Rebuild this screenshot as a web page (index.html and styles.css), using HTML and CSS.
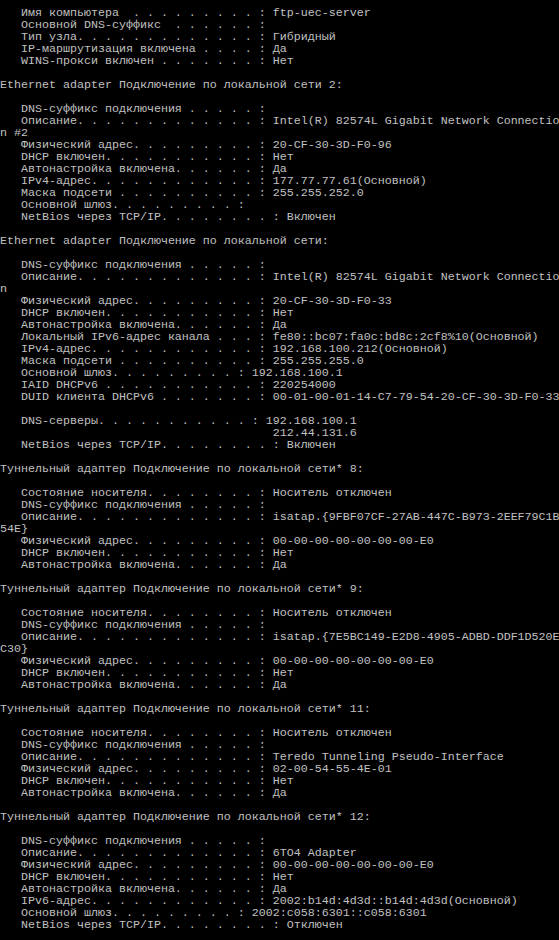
FILE: index.html
```html
<!DOCTYPE html>
<html lang="ru">

<head>
  <meta charset="UTF-8">
  <meta name="viewport" content="width=device-width, initial-scale=1.0">
  <title>ipconfig /all</title>
  <link rel="stylesheet" href="styles.css">
</head>

<body>
  <pre class="console">   Имя компьютера  . . . . . . . . . : ftp-uec-server
   Основной DNS-суффикс  . . . . . . :
   Тип узла. . . . . . . . . . . . . : Гибридный
   IP-маршрутизация включена . . . . : Да
   WINS-прокси включен . . . . . . . : Нет

Ethernet adapter Подключение по локальной сети 2:

   DNS-суффикс подключения . . . . . :
   Описание. . . . . . . . . . . . . : Intel(R) 82574L Gigabit Network Connectio
n #2
   Физический адрес. . . . . . . . . : 20-CF-30-3D-F0-96
   DHCP включен. . . . . . . . . . . : Нет
   Автонастройка включена. . . . . . : Да
   IPv4-адрес. . . . . . . . . . . . : 177.77.77.61(Основной)
   Маска подсети . . . . . . . . . . : 255.255.252.0
   Основной шлюз. . . . . . . . . :
   NetBios через TCP/IP. . . . . . . . : Включен

Ethernet adapter Подключение по локальной сети:

   DNS-суффикс подключения . . . . . :
   Описание. . . . . . . . . . . . . : Intel(R) 82574L Gigabit Network Connectio
n
   Физический адрес. . . . . . . . . : 20-CF-30-3D-F0-33
   DHCP включен. . . . . . . . . . . : Нет
   Автонастройка включена. . . . . . : Да
   Локальный IPv6-адрес канала . . . : fe80::bc07:fa0c:bd8c:2cf8%10(Основной)
   IPv4-адрес. . . . . . . . . . . . : 192.168.100.212(Основной)
   Маска подсети . . . . . . . . . . : 255.255.255.0
   Основной шлюз. . . . . . . . . : 192.168.100.1
   IAID DHCPv6 . . . . . . . . . . . : 220254000
   DUID клиента DHCPv6 . . . . . . . : 00-01-00-01-14-C7-79-54-20-CF-30-3D-F0-33

   DNS-серверы. . . . . . . . . . . : 192.168.100.1
                                       212.44.131.6
   NetBios через TCP/IP. . . . . . . . : Включен

Туннельный адаптер Подключение по локальной сети* 8:

   Состояние носителя. . . . . . . . : Носитель отключен
   DNS-суффикс подключения . . . . . :
   Описание. . . . . . . . . . . . . : isatap.{9FBF07CF-27AB-447C-B973-2EEF79C1B
54E}
   Физический адрес. . . . . . . . . : 00-00-00-00-00-00-00-E0
   DHCP включен. . . . . . . . . . . : Нет
   Автонастройка включена. . . . . . : Да

Туннельный адаптер Подключение по локальной сети* 9:

   Состояние носителя. . . . . . . . : Носитель отключен
   DNS-суффикс подключения . . . . . :
   Описание. . . . . . . . . . . . . : isatap.{7E5BC149-E2D8-4905-ADBD-DDF1D520E
C30}
   Физический адрес. . . . . . . . . : 00-00-00-00-00-00-00-E0
   DHCP включен. . . . . . . . . . . : Нет
   Автонастройка включена. . . . . . : Да

Туннельный адаптер Подключение по локальной сети* 11:

   Состояние носителя. . . . . . . . : Носитель отключен
   DNS-суффикс подключения . . . . . :
   Описание. . . . . . . . . . . . . : Teredo Tunneling Pseudo-Interface
   Физический адрес. . . . . . . . . : 02-00-54-55-4E-01
   DHCP включен. . . . . . . . . . . : Нет
   Автонастройка включена. . . . . . : Да

Туннельный адаптер Подключение по локальной сети* 12:

   DNS-суффикс подключения . . . . . :
   Описание. . . . . . . . . . . . . : 6TO4 Adapter
   Физический адрес. . . . . . . . . : 00-00-00-00-00-00-00-E0
   DHCP включен. . . . . . . . . . . : Нет
   Автонастройка включена. . . . . . : Да
   IPv6-адрес. . . . . . . . . . . . : 2002:b14d:4d3d::b14d:4d3d(Основной)
   Основной шлюз. . . . . . . . . : 2002:c058:6301::c058:6301
   NetBios через TCP/IP. . . . . . . . : Отключен
</pre>
</body>

</html>
```

FILE: styles.css
```css
:root {
  --bg-color: #000;
  --txt-color: #c0c0c0;
}

* {
  margin: 0;
  padding: 0;
  box-sizing: border-box;
}

html,
body {
  height: 100%;
  background-color: var(--bg-color);
  overflow: hidden;
}

.console {
  padding-top: 7px;
  font-family: "Liberation Mono", "DejaVu Sans Mono", monospace;
  font-size: 11.665px;
  line-height: 12px;
  color: var(--txt-color);
  white-space: pre;
}
```
